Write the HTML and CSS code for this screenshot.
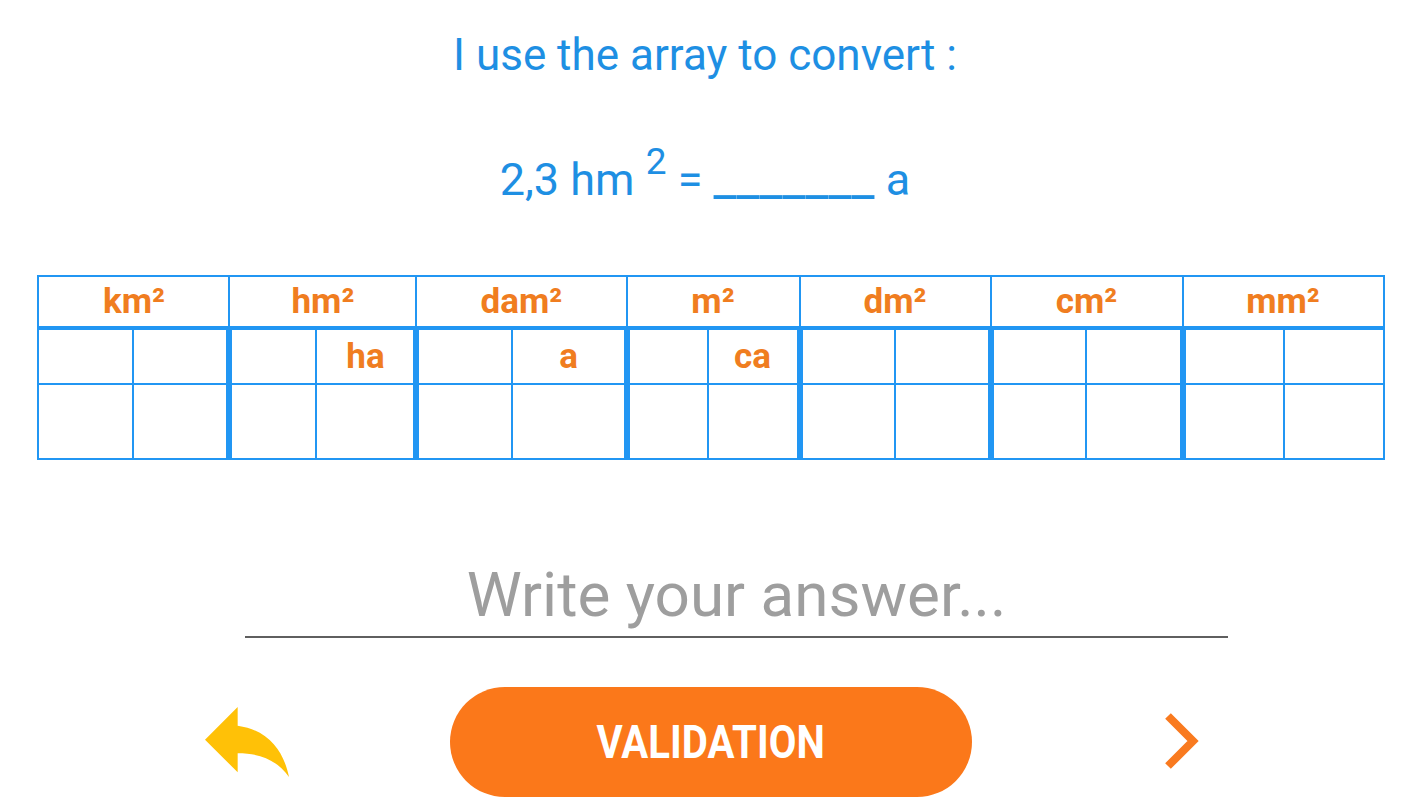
FILE: index.html
```html
<!DOCTYPE html>
<html lang="en">
<head>
<meta charset="utf-8">
<title>Convert</title>
<link rel="stylesheet" href="styles.css">
</head>
<body>
<main class="page">
  <h1 class="title">I use the array to convert :</h1>
  <p class="equation">2,3 hm <sup class="exp">2</sup> = <span class="blank">_______</span> a</p>

  <table class="conv">
    <colgroup>
      <col class="w95"><col class="w96"><col class="w87"><col class="w100">
      <col class="w96"><col class="w114"><col class="w81"><col class="w92">
      <col class="w95"><col class="w96"><col class="w95"><col class="w97">
      <col class="w101"><col class="w100">
    </colgroup>
    <tr class="head">
      <th colspan="2">km²</th><th colspan="2">hm²</th><th colspan="2">dam²</th>
      <th colspan="2">m²</th><th colspan="2">dm²</th><th colspan="2">cm²</th><th colspan="2">mm²</th>
    </tr>
    <tr class="r1">
      <td></td><td></td>
      <td class="gs"></td><td>ha</td>
      <td class="gs"></td><td>a</td>
      <td class="gs"></td><td>ca</td>
      <td class="gs"></td><td></td>
      <td class="gs"></td><td></td>
      <td class="gs"></td><td></td>
    </tr>
    <tr class="r2">
      <td></td><td></td>
      <td class="gs"></td><td></td>
      <td class="gs"></td><td></td>
      <td class="gs"></td><td></td>
      <td class="gs"></td><td></td>
      <td class="gs"></td><td></td>
      <td class="gs"></td><td></td>
    </tr>
  </table>

  <div class="answer">
    <input class="answer-input" type="text" placeholder="Write your answer...">
  </div>

  <div class="actions">
    <button class="icon-btn back" aria-label="Back">
      <svg width="86" height="70" viewBox="3 5 18 15" aria-hidden="true">
        <path d="M10 9V5l-7 7 7 7v-4.1c5 0 8.5 1.6 11 5.1-1-5-4-10-11-11z" fill="#FFC107"/>
      </svg>
    </button>
    <button class="validate"><span class="validate-label">VALIDATION</span></button>
    <button class="icon-btn next" aria-label="Next">
      <svg width="40" height="64" viewBox="0 0 40 64" aria-hidden="true">
        <polyline points="6,6 31,31 6,56" fill="none" stroke="#F97A1F" stroke-width="8" stroke-linecap="butt" stroke-linejoin="miter"/>
      </svg>
    </button>
  </div>
</main>
</body>
</html>
```

FILE: styles.css
```css
html, body {
  margin: 0;
  padding: 0;
  background: #ffffff;
}

body {
  font-family: Roboto, "Liberation Sans", Arial, sans-serif;
  width: 1422px;
  height: 800px;
  overflow: hidden;
}

.page {
  display: flex;
  flex-direction: column;
  align-items: center;
}

.title {
  margin: 29px 0 0;
  padding-right: 12px;
  font-size: 44px;
  font-weight: 400;
  line-height: 52px;
  color: #1E8FE3;
}

.equation {
  margin: 71px 0 0;
  padding-right: 12px;
  font-size: 45px;
  line-height: 56px;
  color: #1E8FE3;
}

.exp {
  font-size: 37px;
  vertical-align: 21px;
  line-height: 0;
}

.blank {
  font-size: 51px;
  line-height: 0;
}

.conv {
  margin-top: 67px;
  border-collapse: collapse;
  table-layout: fixed;
  width: 1345px;
  border: 2px solid #2196F3;
}

.w81 { width: 81px; }
.w87 { width: 87px; }
.w92 { width: 92px; }
.w95 { width: 95px; }
.w96 { width: 96px; }
.w97 { width: 97px; }
.w100 { width: 100px; }
.w101 { width: 101px; }
.w114 { width: 114px; }

.conv th,
.conv td {
  border: 2px solid #2196F3;
  padding: 0;
  text-align: center;
  color: #F07D20;
  font-weight: 700;
  font-size: 35px;
}

.conv th {
  height: 49px;
  border-bottom: 4px solid #2196F3;
}

.conv .r1 td { height: 53px; }
.conv .r2 td { height: 73px; }

.conv td.gs {
  border-left: 6px solid #2196F3;
}

.answer {
  align-self: flex-start;
  margin: 99px 0 0 245px;
  width: 983px;
}

.answer-input {
  display: block;
  width: 100%;
  box-sizing: border-box;
  border: none;
  border-bottom: 2px solid #5f5f5f;
  outline: none;
  padding: 0 0 7px;
  height: 79px;
  line-height: 70px;
  font-family: Roboto, "Liberation Sans", Arial, sans-serif;
  font-size: 62px;
  text-align: center;
  color: #333;
  background: transparent;
}

.answer-input::placeholder {
  color: #9E9E9E;
}

.actions {
  align-self: flex-start;
  display: flex;
  align-items: center;
  margin: 49px 0 0 204px;
}

.icon-btn {
  border: none;
  background: transparent;
  padding: 0;
  display: flex;
  cursor: pointer;
}

.validate {
  margin-left: 160px;
  width: 522px;
  height: 110px;
  border: none;
  border-radius: 55px;
  background: #FB781A;
  color: #ffffff;
  font-family: Roboto, "Liberation Sans", Arial, sans-serif;
  font-weight: 700;
  font-size: 46px;
  cursor: pointer;
  display: flex;
  align-items: center;
  justify-content: center;
}

.validate-label {
  display: inline-block;
  transform: scaleX(0.873);
}

.next {
  margin-left: 190px;
}
```
